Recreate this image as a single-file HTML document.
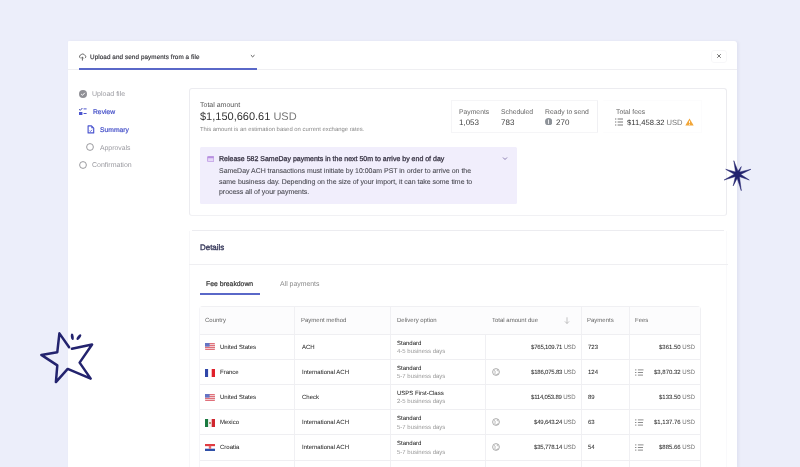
<!DOCTYPE html>
<html><head><meta charset="utf-8">
<style>
*{margin:0;padding:0;box-sizing:border-box}
html,body{width:800px;height:467px;overflow:hidden;background:#eceefa;-webkit-font-smoothing:antialiased;text-rendering:geometricPrecision;font-family:"Liberation Sans",sans-serif;color:#333}
.a{position:absolute;white-space:nowrap;will-change:transform}
#panel{position:absolute;left:68px;top:40.5px;width:669px;height:427px;background:#fff;border-radius:1px 3px 0 0;box-shadow:1.5px 0 3px rgba(40,40,90,0.05)}
.hline{position:absolute;height:1px;background:#efeff2}
.vline{position:absolute;width:1px;background:#f0f0f3}
.th{font-size:6px;color:#666}.td{font-size:6px;color:#2a2a2a;-webkit-text-stroke:0.04px #2a2a2a}.tds{font-size:6px;color:#999}.usd{color:#888}.amt{letter-spacing:-0.2px}
</style></head><body>
<div id="panel"></div>

<!-- header -->
<svg class="a" style="left:78px;top:51.6px" width="10" height="10" viewBox="0 0 10 10"><path d="M2 5.8C0.9 5 1.5 2.9 3 2.9C3.7 1.6 6 1.6 6.6 3.2C7.8 3.3 8.2 4.9 7.6 5.6" fill="none" stroke="#6a6a6a" stroke-width="1" stroke-linecap="round"/><path d="M4.4 8.2V5.2M3.3 6.2 4.4 5.1 5.5 6.2" fill="none" stroke="#6a6a6a" stroke-width="1" stroke-linecap="round"/></svg>
<div class="a" style="left:89.5px;top:54.1px;font-size:6.3px;letter-spacing:0.095px;color:#2e2e33;-webkit-text-stroke:0.15px #2e2e33">Upload and send payments from a file</div>
<svg class="a" style="left:250px;top:54.2px" width="6" height="5" viewBox="0 0 6 5"><path d="M0.9 1.2 2.6 2.8 4.5 1.2" fill="none" stroke="#555" stroke-width="1"/></svg>
<div class="hline" style="left:68px;top:69px;width:669px"></div>
<div class="a" style="left:79px;top:68px;width:178px;height:2px;background:#5a68c8"></div>
<div class="a" style="left:711px;top:50px;width:16px;height:13px;border:1px solid #f7f7f9;border-radius:3px"></div>
<svg class="a" style="left:716px;top:53px" width="6" height="6" viewBox="0 0 6 6"><path d="M1.2 1.2 4.8 4.8M4.8 1.2 1.2 4.8" stroke="#707070" stroke-width="0.95"/></svg>

<!-- left nav -->
<svg class="a" style="left:78.6px;top:90px" width="8" height="8" viewBox="0 0 8 8"><circle cx="4" cy="4" r="4" fill="#909096"/><path d="M2.2 4.1 3.5 5.3 5.8 2.8" fill="none" stroke="#fff" stroke-width="1"/></svg>
<div class="a" style="left:92px;top:90.70px;font-size:7px;color:#9a9aa0">Upload file</div>
<svg class="a" style="left:78px;top:107px" width="10" height="9" viewBox="0 0 10 9"><path d="M1.1 2.3 2.3 3.3 4.4 1" fill="none" stroke="#4046b0" stroke-width="1"/><rect x="1" y="5" width="3.4" height="3" fill="#4b55cf"/><path d="M5.6 1.9h3M5.6 6.5h3" stroke="#4b55cf" stroke-width="1"/></svg>
<div class="a" style="left:92.9px;top:109.00px;font-size:6.75px;color:#4550c8;-webkit-text-stroke:0.2px #4550c8">Review</div>
<svg class="a" style="left:86.5px;top:125px" width="8" height="9" viewBox="0 0 8 9"><path d="M1.1 0.9h3.4L6.7 3.1V7.9H1.1z" fill="none" stroke="#4b55cf" stroke-width="1.15" stroke-linejoin="round"/><path d="M4.3 0.9V3.3H6.7z" fill="#4b55cf"/><path d="M2.6 5.7 3.4 6.5 5 4.8" fill="none" stroke="#4b55cf" stroke-width="0.85"/></svg>
<div class="a" style="left:99.6px;top:126.70px;font-size:6.75px;color:#4550c8;-webkit-text-stroke:0.2px #4550c8">Summary</div>
<svg class="a" style="left:86px;top:143px" width="8" height="8" viewBox="0 0 8 8"><circle cx="4" cy="4" r="3.4" fill="none" stroke="#8e8e94" stroke-width="0.9"/></svg>
<div class="a" style="left:99.6px;top:144.50px;font-size:6.85px;color:#9a9aa0">Approvals</div>
<svg class="a" style="left:78.5px;top:160.5px" width="8" height="8" viewBox="0 0 8 8"><circle cx="4" cy="4" r="3.4" fill="none" stroke="#8e8e94" stroke-width="0.9"/></svg>
<div class="a" style="left:92px;top:161.70px;font-size:7px;color:#9a9aa0">Confirmation</div>

<!-- summary card -->
<div class="a" style="left:189px;top:88px;width:538px;height:128px;border:1px solid #ececf0;border-bottom-color:#f1f1f4;border-radius:3px"></div>
<div class="a" style="left:200px;top:101.5px;font-size:7px;color:#555">Total amount</div>
<div class="a" style="left:200px;top:111.1px;font-size:11px;color:#333">$1,150,660.61 <span style="color:#777">USD</span></div>
<div class="a" style="left:200px;top:126.8px;font-size:5.9px;color:#888">This amount is an estimation based on current exchange rates.</div>

<div class="a" style="left:450.5px;top:99.5px;width:146.5px;height:32.5px;border:1px solid #f5f5f7;border-right-color:#f0f0f3;border-radius:1px"></div>
<div class="a" style="left:459px;top:109.20px;font-size:6.8px;color:#666">Payments</div>
<div class="a" style="left:459px;top:117.5px;font-size:8px;color:#444">1,053</div>
<div class="a" style="left:501px;top:109.20px;font-size:6.8px;color:#666">Scheduled</div>
<div class="a" style="left:501px;top:117.5px;font-size:8px;color:#444">783</div>
<div class="a" style="left:545px;top:109.20px;font-size:6.8px;color:#666">Ready to send</div>
<svg class="a" style="left:544.8px;top:118.3px" width="7.4" height="7.4" viewBox="0 0 8 8"><circle cx="4" cy="4" r="4" fill="#8d9298"/><path d="M3.8 1.6v4.8" stroke="#f4f4f6" stroke-width="1"/></svg>
<div class="a" style="left:556px;top:117.5px;font-size:8px;color:#444">270</div>

<div class="a" style="left:603px;top:99.5px;width:99px;height:32.5px;border:1px solid #fcfcfd;border-left:none;border-radius:1px"></div>
<div class="a" style="left:616px;top:109.20px;font-size:6.8px;color:#666">Total fees</div>
<svg class="a" style="left:615px;top:118px" width="8" height="8" viewBox="0 0 8 8"><path d="M0 1h1.3M0 4h1.3M0 7h1.3M2.6 1H8M2.6 4H8M2.6 7H8" stroke="#777" stroke-width="1"/></svg>
<div class="a" style="left:626.5px;top:117.5px;font-size:7.6px;color:#333">$11,458.32 <span style="color:#777">USD</span></div>
<svg class="a" style="left:685px;top:117.5px" width="9" height="8" viewBox="0 0 9 8"><path d="M4.5 0.4 8.7 7.6H0.3z" fill="#f2a638"/><path d="M4.5 2.8v2.4" stroke="#fff" stroke-width="0.9"/><circle cx="4.5" cy="6.3" r="0.5" fill="#fff"/></svg>

<!-- banner -->
<div class="a" style="left:200px;top:146.7px;width:316.5px;height:57px;background:#f1eefc;border-radius:1.5px"></div>
<svg class="a" style="left:207px;top:155.7px" width="7.4" height="6.2" viewBox="0 0 8 7"><rect x="0.5" y="0.5" width="7" height="6" rx="0.8" fill="#e6d8f8" stroke="#b890e0" stroke-width="0.9"/><rect x="0.5" y="0.5" width="7" height="2" fill="#b890e0"/></svg>
<div class="a" style="left:218.6px;top:155.60px;font-size:7px;color:#3a3646;-webkit-text-stroke:0.3px #3a3646">Release 582 SameDay payments in the next 50m to arrive by end of day</div>
<svg class="a" style="left:502px;top:156.2px" width="6" height="5" viewBox="0 0 6 5"><path d="M1 1.5 3 3.5 5 1.5" fill="none" stroke="#8070a8" stroke-width="0.9"/></svg>
<div class="a" style="left:219px;top:167.00px;font-size:6.95px;line-height:10.5px;color:#4a4a52;-webkit-text-stroke:0.1px #4a4a52;white-space:normal;width:290px">SameDay ACH transactions must initiate by 10:00am PST in order to arrive on the<br>same business day. Depending on the size of your import, it can take some time to<br>process all of your payments.</div>

<!-- details card -->
<div class="a" style="left:189px;top:231px;width:538px;height:236px;border-left:1px solid #f7f7f9;border-right:1px solid #f9f9fb"></div><div class="hline" style="left:192px;top:230px;width:532px;background:#ececf0"></div>
<div class="a" style="left:199.8px;top:242.6px;font-size:7.95px;color:#383a5c;-webkit-text-stroke:0.35px #383a5c">Details</div>
<div class="hline" style="left:189px;top:264px;width:539px"></div>
<div class="a" style="left:205.9px;top:280.9px;font-size:6.85px;color:#333;-webkit-text-stroke:0.2px #333">Fee breakdown</div>
<div class="a" style="left:280.3px;top:280.8px;font-size:6.9px;color:#888">All payments</div>
<div class="a" style="left:200px;top:293px;width:59.5px;height:2px;background:#5a68c8"></div>

<!-- table -->
<div class="a" style="left:199px;top:306px;width:502px;height:161px;border:1px solid #f0f0f3;border-left-color:#f5f5f8;border-bottom:none;border-radius:4px 4px 0 0"></div>
<div class="a" style="left:200px;top:307px;width:500px;height:27px;background:#fcfcfd"></div>
<div id="tbl"><div class="a th" style="left:205.3px;top:317.5px">Country</div>
<div class="a th" style="left:300.9px;top:317.5px">Payment method</div>
<div class="a th" style="left:396.5px;top:317.5px">Delivery option</div>
<div class="a th" style="left:492.0px;top:317.5px">Total amount due</div>
<div class="a th" style="left:587.2px;top:317.5px">Payments</div>
<div class="a th" style="left:634.8px;top:317.5px">Fees</div>
<svg class="a" style="left:564px;top:316.8px" width="6" height="7" viewBox="0 0 6 7"><path d="M3 0.3V6.5M0.9 4.4 3 6.5 5.1 4.4" fill="none" stroke="#aaa" stroke-width="0.7"/></svg>
<div class="vline" style="left:294px;top:307px;height:160px"></div>
<div class="vline" style="left:390px;top:307px;height:160px"></div>
<div class="vline" style="left:485px;top:334px;height:133px"></div>
<div class="vline" style="left:581px;top:307px;height:160px"></div>
<div class="vline" style="left:629px;top:307px;height:160px"></div>
<div class="hline" style="left:200px;top:334px;width:500px"></div>
<svg class="a" style="left:205px;top:343.4px" width="10" height="7" viewBox="0 0 10 7"><rect width="10" height="7" rx="0.8" fill="#e0707a"/><path d="M0 1.5h10M0 3.5h10M0 5.5h10" stroke="#f4e4e6" stroke-width="0.8"/><rect width="4.6" height="3.6" fill="#6474c4"/></svg>
<div class="a td" style="left:220px;top:344.7px">United States</div>
<div class="a td" style="left:301.5px;top:344.7px">ACH</div>
<div class="a td" style="left:396.5px;top:340.7px">Standard</div>
<div class="a tds" style="left:396.5px;top:349.2px">4-5 business days</div>
<div class="a td amt" style="right:224.39999999999998px;top:344.7px">$765,109.71 <span class="usd">USD</span></div>
<div class="a td" style="left:587.5px;top:344.7px">723</div>
<div class="a td" style="right:104.5px;top:344.7px">$361.50 <span class="usd">USD</span></div>
<div class="hline" style="left:200px;top:359px;width:500px"></div>
<svg class="a" style="left:205px;top:368.5px" width="10" height="8" viewBox="0 0 10 8"><rect width="3.3" height="8" fill="#3046a8"/><rect x="3.3" width="3.4" height="8" fill="#fff"/><rect x="6.7" width="3.3" height="8" fill="#e0202a"/></svg>
<div class="a td" style="left:220px;top:369.8px">France</div>
<div class="a td" style="left:301.5px;top:369.8px">International ACH</div>
<div class="a td" style="left:396.5px;top:365.8px">Standard</div>
<div class="a tds" style="left:396.5px;top:374.3px">5-7 business days</div>
<svg class="a" style="left:492px;top:367.8px" width="8" height="8" viewBox="0 0 8 8"><circle cx="4" cy="4" r="3.4" fill="none" stroke="#999" stroke-width="0.8"/><path d="M2 2.2c1 .6 1.5 1.6 1 2.6-.3.6 0 1.2.5 1.6M5.5 1.5c-.5.8-.2 1.5.7 1.8M4.5 7c.3-.8.9-1.3 1.8-1.3" fill="none" stroke="#999" stroke-width="0.7"/></svg>
<div class="a td amt" style="right:224.39999999999998px;top:369.8px">$186,075.83 <span class="usd">USD</span></div>
<div class="a td" style="left:587.5px;top:369.8px">124</div>
<svg class="a" style="left:635px;top:368.6px" width="9" height="7" viewBox="0 0 9 7"><path d="M0 0.9h1.4M0 3.5h1.4M0 6.1h1.4M2.9 0.9H8.5M2.9 3.5H8M2.9 6.1H8" stroke="#8c8c8c" stroke-width="1"/></svg>
<div class="a td" style="right:104.5px;top:369.8px">$3,870.32 <span class="usd">USD</span></div>
<div class="hline" style="left:200px;top:384px;width:500px"></div>
<svg class="a" style="left:205px;top:393.6px" width="10" height="7" viewBox="0 0 10 7"><rect width="10" height="7" rx="0.8" fill="#e0707a"/><path d="M0 1.5h10M0 3.5h10M0 5.5h10" stroke="#f4e4e6" stroke-width="0.8"/><rect width="4.6" height="3.6" fill="#6474c4"/></svg>
<div class="a td" style="left:220px;top:394.9px">United States</div>
<div class="a td" style="left:301.5px;top:394.9px">Check</div>
<div class="a td" style="left:396.5px;top:390.9px">USPS First-Class</div>
<div class="a tds" style="left:396.5px;top:399.4px">2-5 business days</div>
<div class="a td amt" style="right:224.39999999999998px;top:394.9px">$114,053.89 <span class="usd">USD</span></div>
<div class="a td" style="left:587.5px;top:394.9px">89</div>
<div class="a td" style="right:104.5px;top:394.9px">$133.50 <span class="usd">USD</span></div>
<div class="hline" style="left:200px;top:409px;width:500px"></div>
<svg class="a" style="left:205px;top:418.7px" width="10" height="8" viewBox="0 0 10 8"><rect width="3.3" height="8" fill="#1a7a40"/><rect x="3.3" width="3.4" height="8" fill="#f4f4f4"/><circle cx="5" cy="4" r="1" fill="#a07040"/><rect x="6.7" width="3.3" height="8" fill="#d0262e"/></svg>
<div class="a td" style="left:220px;top:420.0px">Mexico</div>
<div class="a td" style="left:301.5px;top:420.0px">International ACH</div>
<div class="a td" style="left:396.5px;top:416.0px">Standard</div>
<div class="a tds" style="left:396.5px;top:424.5px">5-7 business days</div>
<svg class="a" style="left:492px;top:418.0px" width="8" height="8" viewBox="0 0 8 8"><circle cx="4" cy="4" r="3.4" fill="none" stroke="#999" stroke-width="0.8"/><path d="M2 2.2c1 .6 1.5 1.6 1 2.6-.3.6 0 1.2.5 1.6M5.5 1.5c-.5.8-.2 1.5.7 1.8M4.5 7c.3-.8.9-1.3 1.8-1.3" fill="none" stroke="#999" stroke-width="0.7"/></svg>
<div class="a td amt" style="right:224.39999999999998px;top:420.0px">$49,643.24 <span class="usd">USD</span></div>
<div class="a td" style="left:587.5px;top:420.0px">63</div>
<svg class="a" style="left:635px;top:418.8px" width="9" height="7" viewBox="0 0 9 7"><path d="M0 0.9h1.4M0 3.5h1.4M0 6.1h1.4M2.9 0.9H8.5M2.9 3.5H8M2.9 6.1H8" stroke="#8c8c8c" stroke-width="1"/></svg>
<div class="a td" style="right:104.5px;top:420.0px">$1,137.76 <span class="usd">USD</span></div>
<div class="hline" style="left:200px;top:434px;width:500px"></div>
<svg class="a" style="left:205px;top:443.8px" width="10" height="7" viewBox="0 0 10 7"><rect width="10" height="2.4" fill="#e03a40"/><rect y="2.4" width="10" height="2.3" fill="#fff"/><rect y="4.7" width="10" height="2.3" fill="#3050a8"/><rect x="3.8" y="1.8" width="2.4" height="3" fill="#e86a70"/></svg>
<div class="a td" style="left:220px;top:445.1px">Croatia</div>
<div class="a td" style="left:301.5px;top:445.1px">International ACH</div>
<div class="a td" style="left:396.5px;top:441.1px">Standard</div>
<div class="a tds" style="left:396.5px;top:449.6px">5-7 business days</div>
<svg class="a" style="left:492px;top:443.1px" width="8" height="8" viewBox="0 0 8 8"><circle cx="4" cy="4" r="3.4" fill="none" stroke="#999" stroke-width="0.8"/><path d="M2 2.2c1 .6 1.5 1.6 1 2.6-.3.6 0 1.2.5 1.6M5.5 1.5c-.5.8-.2 1.5.7 1.8M4.5 7c.3-.8.9-1.3 1.8-1.3" fill="none" stroke="#999" stroke-width="0.7"/></svg>
<div class="a td amt" style="right:224.39999999999998px;top:445.1px">$35,778.14 <span class="usd">USD</span></div>
<div class="a td" style="left:587.5px;top:445.1px">54</div>
<svg class="a" style="left:635px;top:443.9px" width="9" height="7" viewBox="0 0 9 7"><path d="M0 0.9h1.4M0 3.5h1.4M0 6.1h1.4M2.9 0.9H8.5M2.9 3.5H8M2.9 6.1H8" stroke="#8c8c8c" stroke-width="1"/></svg>
<div class="a td" style="right:104.5px;top:445.1px">$885.66 <span class="usd">USD</span></div>
<div class="hline" style="left:200px;top:460px;width:500px"></div></div><!--endtbl-->
<!--stars--><svg class="a" style="left:35px;top:325px" width="65" height="65" viewBox="0 0 65 65"><path d="M34.1 22.3L24.4 8.4L22.3 27.2L6.3 29.9L22.3 40.4L20.9 57.1L32.7 43.9L55.7 53.6L44.6 37.6L57.1 19.5L36.9 23.7" fill="none" stroke="#23236e" stroke-width="2.5" stroke-linejoin="round" stroke-linecap="round"/><ellipse cx="37.3" cy="11.8" rx="1.45" ry="3.3" transform="rotate(-6 37.3 11.8)" fill="#23236e"/><ellipse cx="43.9" cy="12.2" rx="1.45" ry="3.3" transform="rotate(38 43.9 12.2)" fill="#23236e"/></svg><svg class="a" style="left:720px;top:155px" width="40" height="40" viewBox="0 0 40 40"><path d="M19.04 18.78L13.80 5.70L15.96 19.62ZM15.94 19.56L21.30 35.70L19.06 18.84ZM18.11 17.72L5.70 14.30L16.89 20.68ZM18.05 20.70L30.90 14.30L16.95 17.70ZM16.86 17.73L4.10 25.00L18.14 20.67ZM16.79 20.64L29.30 25.00L18.21 17.76ZM18.66 19.78L21.30 11.60L16.34 18.62ZM16.00 18.65L13.20 30.90L19.00 19.75Z" fill="#23236e" stroke="#23236e" stroke-width="0.5" stroke-linejoin="round"/><circle cx="17.5" cy="19.19999999999999" r="2.2" fill="#23236e"/></svg><!--/stars-->
</body></html>
